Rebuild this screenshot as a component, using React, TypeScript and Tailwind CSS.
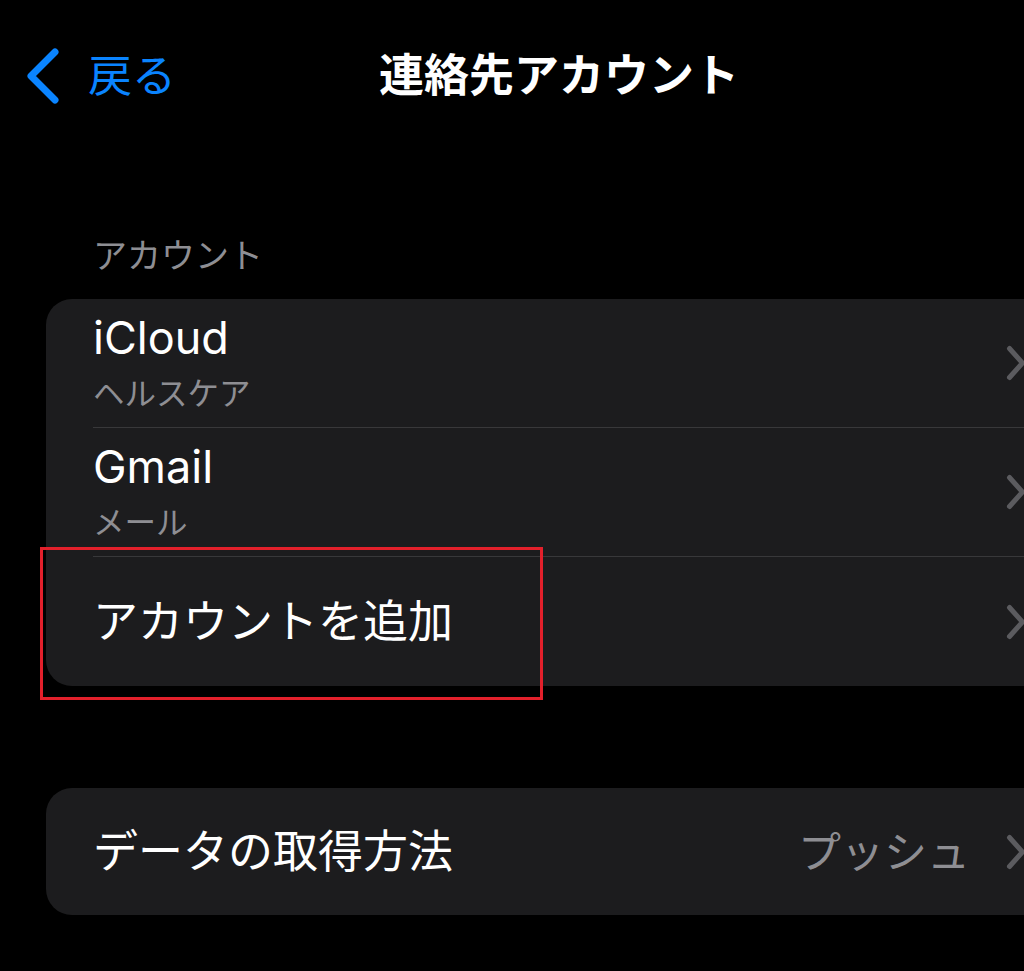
import React from "react";

const FONT = { fontFamily: '"Inter", "Noto Sans CJK JP", sans-serif' };

function Chevron() {
  return (
    <svg width="20" height="36" viewBox="0 0 20 36" className="shrink-0">
      <path d="M3.5 3.5 L16.5 18 L3.5 32.5" fill="none" stroke="#5b5b5f" strokeWidth="5" strokeLinecap="round" strokeLinejoin="round" />
    </svg>
  );
}

function Row({ title, sub, value, last }: { title: string; sub?: string; value?: string; last?: boolean }) {
  return (
    <div className="pl-[47px] h-[129px] flex">
      <div className={`flex-1 flex items-center justify-between pr-[30px] ${last ? "" : "border-b border-[#38383a]"}`}>
        {sub ? (
          <div className="flex flex-col">
            <div className="text-[45px] leading-[50px] text-white">{title}</div>
            <div className="text-[31.5px] leading-[40px] text-[#8e8e93] mt-[11px]">{sub}</div>
          </div>
        ) : (
          <div className="text-[45px] leading-[52px] text-white">{title}</div>
        )}
        <div className="flex items-center gap-[36px]">
          {value && <div className="text-[43px] leading-[52px] text-[#8e8e93]">{value}</div>}
          <Chevron />
        </div>
      </div>
    </div>
  );
}

export default function App() {
  return (
    <div className="w-[1024px] h-[971px] bg-black overflow-hidden relative" style={FONT}>
      {/* nav */}
      <div className="h-[152px] flex items-center pl-[25px]">
        <svg width="36" height="56" viewBox="0 0 36 56" className="shrink-0">
          <path d="M30 4 L6 28 L30 52" fill="none" stroke="#0a84ff" strokeWidth="7" strokeLinecap="round" strokeLinejoin="round" />
        </svg>
        <div className="ml-[27px] text-[44px] leading-[52px] text-[#0a84ff]">戻る</div>
        <div className="ml-[203px] text-[45px] leading-[52px] text-white font-semibold">連絡先アカウント</div>
      </div>

      {/* section header */}
      <div className="h-[147px] flex items-end pb-[26px] pl-[93px]">
        <div className="text-[34px] leading-[34px] text-[#8e8e93]">アカウント</div>
      </div>

      {/* card 1 */}
      <div className="ml-[46px] w-[1010px] bg-[#1c1c1e] rounded-[26px] overflow-hidden">
        <Row title="iCloud" sub="ヘルスケア" />
        <Row title="Gmail" sub="メール" />
        <Row title="アカウントを追加" last />
      </div>

      {/* card 2 */}
      <div className="mt-[102px] ml-[46px] w-[1010px] bg-[#1c1c1e] rounded-[26px] overflow-hidden">
        <div className="pl-[47px] h-[127px] flex">
          <div className="flex-1 flex items-center justify-between pr-[30px]">
            <div className="text-[45px] leading-[52px] text-white">データの取得方法</div>
            <div className="flex items-center gap-[36px]">
              <div className="text-[43px] leading-[52px] text-[#8e8e93]">プッシュ</div>
              <Chevron />
            </div>
          </div>
        </div>
      </div>

      {/* red highlight annotation */}
      <div className="absolute left-[40px] top-[547px] w-[503px] h-[153px] border-[3px] border-[#e3202b]" />
    </div>
  );
}
